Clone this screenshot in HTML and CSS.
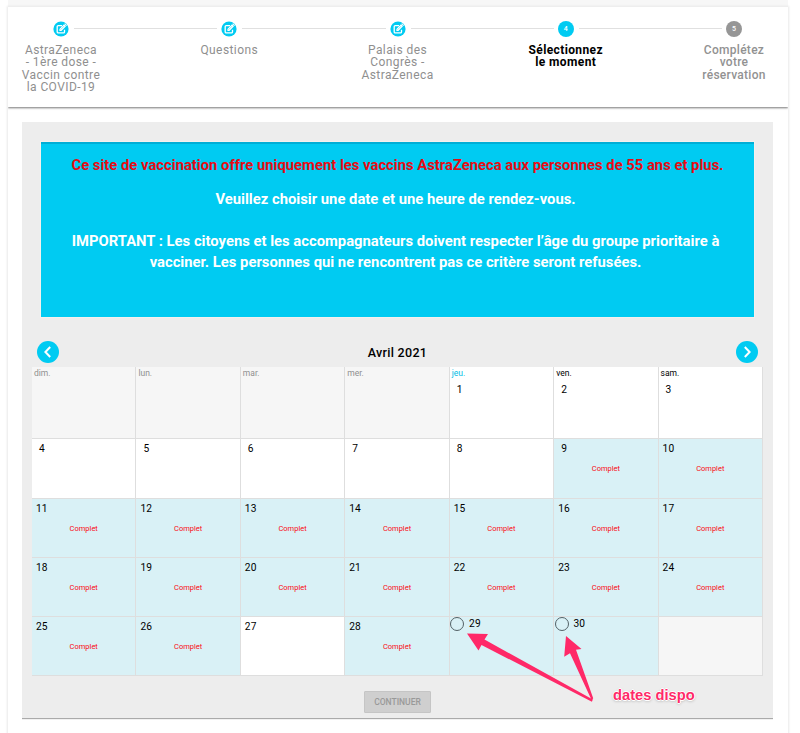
FILE: index.html
```html
<!DOCTYPE html>
<html lang="fr">
<head>
<meta charset="utf-8">
<title>Sélectionnez le moment</title>
<link rel="stylesheet" href="styles.css">
</head>
<body>
<svg class="defs" width="0" height="0" aria-hidden="true">
  <symbol id="edit" viewBox="0 0 16 16">
    <circle cx="8" cy="8" r="7.6" fill="#00cbf2"/>
    <path d="M9 4.600H5.200q-1 0-1 1v5.300q0 1 1 1h5.300q1 0 1-1V8.800" fill="none" stroke="#fff" stroke-width="1.300"/>
    <path d="M6.400 9.900V7.900L11 3.300l2 2-4.600 4.600zM11.400 2.900l.6-.6 2 2-.6.6z" fill="#fff"/>
    <path d="M7.500 8.700l3.600-3.600" stroke="#00cbf2" stroke-width=".45"/>
  </symbol>
</svg>
<main class="page">
  <header class="stepper">
    <div class="step"><svg class="icon"><use href="#edit"/></svg><div class="label">AstraZeneca<br>- 1ère dose -<br>Vaccin contre<br>la COVID-19</div></div>
    <i class="connector"></i>
    <div class="step"><svg class="icon"><use href="#edit"/></svg><div class="label">Questions</div></div>
    <i class="connector"></i>
    <div class="step"><svg class="icon"><use href="#edit"/></svg><div class="label">Palais des<br>Congrès -<br>AstraZeneca</div></div>
    <i class="connector"></i>
    <div class="step active"><span class="number">4</span><div class="label">Sélectionnez<br>le moment</div></div>
    <i class="connector"></i>
    <div class="step next"><span class="number">5</span><div class="label">Complétez<br>votre<br>réservation</div></div>
  </header>
  <section class="panel">
    <div class="banner">
      <p class="warning">Ce site de vaccination offre uniquement les vaccins AstraZeneca aux personnes de 55 ans et plus.</p>
      <p class="choose">Veuillez choisir une date et une heure de rendez-vous.</p>
      <p class="important">IMPORTANT : Les citoyens et les accompagnateurs doivent respecter l’âge du groupe prioritaire à<br>vacciner. Les personnes qui ne rencontrent pas ce critère seront refusées.</p>
    </div>
    <div class="month">
      <button class="arrow"><svg viewBox="0 0 22 22"><path d="M13.200 6L8.400 11l4.800 5"/></svg></button>
      <h2>Avril 2021</h2>
      <button class="arrow"><svg viewBox="0 0 22 22"><path d="M8.800 6l4.800 5-4.800 5"/></svg></button>
    </div>
    <div class="calendar">
      <div class="day empty"><span class="weekday">dim.</span></div>
      <div class="day empty"><span class="weekday">lun.</span></div>
      <div class="day empty"><span class="weekday">mar.</span></div>
      <div class="day empty"><span class="weekday">mer.</span></div>
      <div class="day single"><span class="weekday today">jeu.</span><b>1</b></div>
      <div class="day single"><span class="weekday">ven.</span><b>2</b></div>
      <div class="day single"><span class="weekday">sam.</span><b>3</b></div>
      <div class="day single"><b>4</b></div>
      <div class="day single"><b>5</b></div>
      <div class="day single"><b>6</b></div>
      <div class="day single"><b>7</b></div>
      <div class="day single"><b>8</b></div>
      <div class="day single full"><b>9</b><em>Complet</em></div>
      <div class="day full"><b>10</b><em>Complet</em></div>
      <div class="day full"><b>11</b><em>Complet</em></div>
      <div class="day full"><b>12</b><em>Complet</em></div>
      <div class="day full"><b>13</b><em>Complet</em></div>
      <div class="day full"><b>14</b><em>Complet</em></div>
      <div class="day full"><b>15</b><em>Complet</em></div>
      <div class="day full"><b>16</b><em>Complet</em></div>
      <div class="day full"><b>17</b><em>Complet</em></div>
      <div class="day full"><b>18</b><em>Complet</em></div>
      <div class="day full"><b>19</b><em>Complet</em></div>
      <div class="day full"><b>20</b><em>Complet</em></div>
      <div class="day full"><b>21</b><em>Complet</em></div>
      <div class="day full"><b>22</b><em>Complet</em></div>
      <div class="day full"><b>23</b><em>Complet</em></div>
      <div class="day full"><b>24</b><em>Complet</em></div>
      <div class="day full"><b>25</b><em>Complet</em></div>
      <div class="day full"><b>26</b><em>Complet</em></div>
      <div class="day"><b>27</b></div>
      <div class="day full"><b>28</b><em>Complet</em></div>
      <div class="day open"><i class="radio"></i><b>29</b></div>
      <div class="day open"><i class="radio"></i><b>30</b></div>
      <div class="day empty"></div>
    </div>
    <button class="continue">CONTINUER</button>
  </section>
</main>
<svg class="pointers" width="140" height="80" viewBox="460 625 140 80" fill="#ff2968">
  <path d="M467 633.500L488 634l-3.500 5.500L592.800 699.500l-.9 2.200L481.500 645l-3 5.500z"/>
  <path d="M566 636l15.500 13-5.500.7 17.200 48.500-1.500 2L570 653.300l-5.800 3.500z"/>
</svg>
<div class="note">dates dispo</div>
</body>
</html>
```

FILE: styles.css
```css
* { box-sizing: border-box; }
body {
  margin: 0;
  height: 733px;
  overflow: hidden;
  position: relative;
  background: #fff;
  font-family: Roboto, "Liberation Sans", sans-serif;
  color: #000;
}
body::before { content: ""; display: block; height: 7px; margin: 0 12px 0 8px; background: #f7f7f7; }
p, h2 { margin: 0; }
button { border: 0; padding: 0; font-family: inherit; }
.defs { position: absolute; }
.page { width: 780px; height: 740px; margin-left: 8px; box-shadow: 0 0 2px 1px #e9e9e9; background: #fff; }

.stepper {
  display: flex;
  height: 100px;
  padding: 14px 14px 0 13px;
  background: #fff;
  box-shadow: 0 1px 2px #777;
  clip-path: inset(0 0 -4px 0);
}
.step { width: 80px; display: flex; flex-direction: column; align-items: center; }
.icon, .number { width: 16px; height: 16px; flex: none; }
.number {
  border-radius: 50%;
  background: #00cbf2;
  color: #fff;
  font-size: 7px;
  font-weight: 500;
  line-height: 16px;
  text-align: center;
}
.next .number { background: #969696; }
.label {
  margin-top: 7px;
  font-size: 12px;
  line-height: 12.4px;
  letter-spacing: .42px;
  text-align: center;
  white-space: nowrap;
  color: #8f8f8f;
}
.active .label { color: #000; font-weight: 700; letter-spacing: .38px; }
.next .label { font-weight: 500; color: #929292; letter-spacing: .28px; }
.connector { flex: 1; height: 1px; margin: 7px -28px 0 -27px; background: #e0e0e0; }

.panel {
  display: flex;
  flex-direction: column;
  width: 751px;
  height: 596px;
  margin: 15px 0 0 14px;
  padding: 20px 10px 0;
  background: #ededed;
  box-shadow: 0 1px 1px #aaa;
  clip-path: inset(0 0 -3px 0);
}
.banner {
  width: 713px;
  height: 175px;
  margin-left: 9px;
  padding-top: 11px;
  border-top: 2px solid #00aed6;
  background: #00cbf2;
  box-shadow: 0 0 0 1px #f5f1ee;
  color: #fff;
  font-size: 14.8px;
  font-weight: 700;
  line-height: 21px;
  text-align: center;
  white-space: nowrap;
}
.warning { color: #e60b13; }
.choose { margin-top: 13px; padding-right: 4px; }
.important { margin-top: 21px; padding-right: 4px; }

.month { display: flex; justify-content: space-between; align-items: center; height: 22px; margin: 24px 5px 3.500px; }
.month h2 { font-size: 12.5px; font-weight: 500; letter-spacing: .3px; }
.arrow { width: 22px; height: 22px; border-radius: 50%; background: #00cbf2; }
.arrow svg { display: block; fill: none; stroke: #fff; stroke-width: 2; }

.calendar {
  display: grid;
  grid-template-columns: repeat(7, 1fr);
  grid-template-rows: 72.500px 59.500px 59px 59px 59.500px;
  width: 731px;
}
.day {
  display: flex;
  flex-direction: column;
  padding: 3px 4px 0;
  border-right: 1px solid #dedede;
  border-bottom: 1px solid #dedede;
  background: #fff;
}
.empty { background: #f6f6f6; }
.full, .open { background: #d9f1f6; }
.weekday { height: 9px; margin: -1px 0 0 -2px; font-size: 8.500px; line-height: 9px; }
.empty .weekday { color: #8f8f8f; }
.weekday.today { color: #00bde5; }
.day b { font-size: 10.200px; font-weight: 400; line-height: 14px; letter-spacing: .1px; }
.single b { margin-left: 3px; }
.weekday + b { margin-top: 5px; }
.day em { margin-top: 7px; font-size: 7.500px; font-style: normal; line-height: 12px; color: #fa0a14; text-align: center; }
.open { flex-direction: row; padding: 0 0 0 .4px; }
.open b { margin-left: 5px; }
.radio { width: 14px; height: 14px; border: 1.500px solid #536166; border-radius: 50%; }

.continue {
  align-self: center;
  width: 67px;
  height: 22px;
  margin-top: 15px;
  border: 1px solid #c5c5c5;
  border-radius: 1px;
  background: #cfcfcf;
  color: #999;
  font-size: 8.500px;
  font-weight: 500;
}
.pointers { position: absolute; left: 460px; top: 625px; }
.note {
  position: absolute;
  left: 613px;
  top: 686px;
  font: 700 14.700px/18px "Liberation Sans", sans-serif;
  color: #ff2968;
  text-shadow: 1px 0 #fff, -1px 0 #fff, 0 1px #fff, 0 -1px #fff, 0 1px 3px #999;
}
```
